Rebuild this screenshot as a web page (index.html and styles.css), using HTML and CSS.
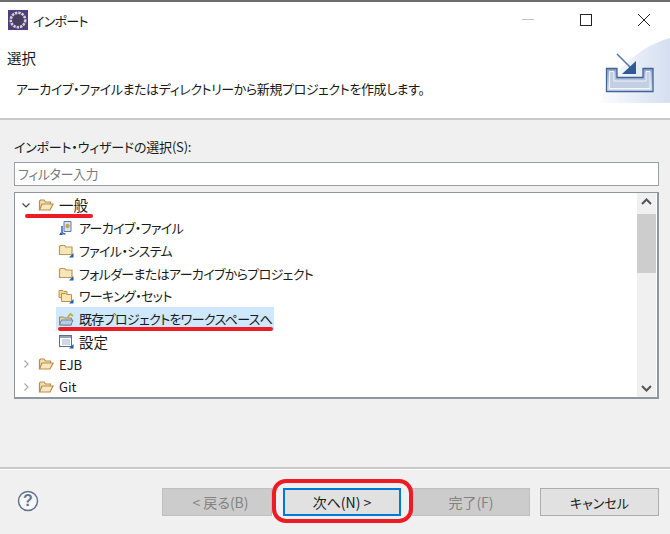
FILE: index.html
```html
<!DOCTYPE html>
<html lang="ja">
<head>
    <meta charset="UTF-8">
    <meta name="viewport" content="width=device-width, initial-scale=1.0">
    <title>インポート</title>
    <link rel="stylesheet" href="styles.css">
</head>
<body>
    <div class="dialog">
        <div class="titlebar">
            <svg class="app-icon" width="20" height="20" viewBox="0 0 20 20">
                <rect width="20" height="20" fill="#4f3f78"/>
                <circle cx="10" cy="10" r="7.2" fill="none" stroke="#d5d3d8" stroke-width="2.6" stroke-dasharray="2.4 1"/>
                <circle cx="10" cy="10" r="5.5" fill="#47415f"/>
            </svg>
            <span class="title-text">インポート</span>
            <div class="win-buttons">
                <svg width="14" height="14" viewBox="0 0 14 14"><path d="M1 6.5h12" stroke="#c4c4c4" fill="none"/></svg>
                <svg width="14" height="14" viewBox="0 0 14 14"><rect x="1.500" y="1.500" width="11" height="11" stroke="#222" fill="none"/></svg>
                <svg width="14" height="14" viewBox="0 0 14 14"><path d="M1 1l12 12M13 1L1 13" stroke="#222" fill="none"/></svg>
            </div>
        </div>

        <div class="banner">
            <div class="banner-text">
                <div class="banner-title">選択</div>
                <div class="banner-desc">アーカイブ・ファイルまたはディレクトリーから新規プロジェクトを作成します。</div>
            </div>
            <svg class="banner-art" width="70" height="66" viewBox="0 0 70 66">
                <defs>
                    <linearGradient id="wash" x1="0" y1="0" x2="1" y2="0">
                        <stop offset="0" stop-color="#fbfcfe"/>
                        <stop offset="1" stop-color="#d5dff0"/>
                    </linearGradient>
                    <linearGradient id="tray" x1="0" y1="0" x2="0" y2="1">
                        <stop offset="0" stop-color="#8fa6cc"/>
                        <stop offset="1" stop-color="#dbe3f0"/>
                    </linearGradient>
                </defs>
                <path d="M0 65C8 40 34 10 70 0V65Z" fill="url(#wash)"/>
                <path d="M6.500 30.500H17V39.500H43V30.500H53V53.500H6.500Z" fill="url(#tray)" stroke="#3f6396" stroke-width="1.300"/>
                <path d="M9.500 33.500H14V43H46V33.500H50V50.500H9.500Z" fill="#c3cfe3" stroke="#fff" stroke-width=".8"/>
                <path d="M17 16L34 33" stroke="#5578aa" stroke-width="1.600"/>
                <path d="M36 23V36H22Z" fill="#2f5a94"/>
            </svg>
        </div>

        <div class="content">
            <label class="field-label">インポート・ウィザードの選択(S):</label>
            <input class="filter" type="text" placeholder="フィルター入力">

            <div class="tree">
                <div class="tree-rows">
                    <div class="row kanji">
                        <svg class="twisty" width="10" height="10" viewBox="0 0 10 10"><path d="M1.500 3.500L5 7l3.500-3.500" stroke="#444" stroke-width="1.200" fill="none"/></svg>
                        <svg class="icon" width="16" height="16" viewBox="0 0 16 16"><use href="#open-folder"/></svg>
                        <span>一般</span>
                    </div>
                    <div class="row child">
                        <svg class="icon" width="16" height="16" viewBox="0 0 16 16">
                            <path d="M6 1.500h7v10H6z" fill="#d9e2ee" stroke="#5f7ea6"/>
                            <circle cx="9.500" cy="6" r="2.200" fill="#c9a25c"/>
                            <path d="M4 6v5c0 2 1.500 3 3.500 3" stroke="#3f6fb0" stroke-width="1.600" fill="none"/>
                            <path d="M1 15h4l-2-3z" fill="#1f5fa8"/>
                        </svg>
                        <span>アーカイブ・ファイル</span>
                    </div>
                    <div class="row child">
                        <svg class="icon" width="16" height="16" viewBox="0 0 16 16"><use href="#folder"/><path d="M15.500 11v4.500H11z" fill="#1f5fa8"/></svg>
                        <span>ファイル・システム</span>
                    </div>
                    <div class="row child">
                        <svg class="icon" width="16" height="16" viewBox="0 0 16 16"><use href="#folder"/><path d="M15.500 11v4.500H11z" fill="#1f5fa8"/></svg>
                        <span>フォルダーまたはアーカイブからプロジェクト</span>
                    </div>
                    <div class="row child">
                        <svg class="icon" width="16" height="16" viewBox="0 0 16 16">
                            <path d="M1 2.500h4l1 1h3v6H1z" fill="#f3d98f" stroke="#bb9150"/>
                            <path d="M3.500 5.500h4l1 1h5v7h-10z" fill="#f8e6b4" stroke="#bb9150"/>
                            <path d="M15.500 11v4.500H11z" fill="#1f5fa8"/>
                        </svg>
                        <span>ワーキング・セット</span>
                    </div>
                    <div class="row child">
                        <span class="selected">
                            <svg class="icon" width="16" height="16" viewBox="0 0 16 16">
                                <path d="M1.500 14V6h4l1 1h7v7z" fill="#e2d3a4" stroke="#8f8a78"/>
                                <path d="M1.500 14l2-5h11.500l-2 5z" fill="#b9cde6" stroke="#6d86a8"/>
                                <path d="M9.500 6.500L12.500 3l2.500 2" stroke="#d0a63e" stroke-width="1.700" fill="none"/>
                            </svg>
                            <span>既存プロジェクトをワークスペースへ</span>
                        </span>
                    </div>
                    <div class="row child kanji">
                        <svg class="icon" width="16" height="16" viewBox="0 0 16 16">
                            <rect x="1.500" y="2.500" width="12" height="11" fill="#fff" stroke="#5a6f90"/>
                            <path d="M2 3h11v2H2z" fill="#8fa3c0"/>
                            <path d="M4 7h8M4 9h8M4 11h8" stroke="#9fb0c8"/>
                            <path d="M15.500 11v4.500H11z" fill="#1f5fa8"/>
                        </svg>
                        <span>設定</span>
                    </div>
                    <div class="row latin">
                        <svg class="twisty" width="10" height="10" viewBox="0 0 10 10"><path d="M3.500 1.500L7 5 3.500 8.500" stroke="#aaa" stroke-width="1.200" fill="none"/></svg>
                        <svg class="icon" width="16" height="16" viewBox="0 0 16 16"><use href="#open-folder"/></svg>
                        <span>EJB</span>
                    </div>
                    <div class="row latin">
                        <svg class="twisty" width="10" height="10" viewBox="0 0 10 10"><path d="M3.500 1.500L7 5 3.500 8.500" stroke="#aaa" stroke-width="1.200" fill="none"/></svg>
                        <svg class="icon" width="16" height="16" viewBox="0 0 16 16"><use href="#open-folder"/></svg>
                        <span>Git</span>
                    </div>
                </div>
                <div class="scrollbar">
                    <svg width="19" height="17" viewBox="0 0 19 17"><path d="M5 11l4.500-4.500L14 11" stroke="#555" stroke-width="2" fill="none"/></svg>
                    <div class="scroll-track"><div class="scroll-thumb"></div></div>
                    <svg width="19" height="17" viewBox="0 0 19 17"><path d="M5 6l4.500 4.500L14 6" stroke="#555" stroke-width="2" fill="none"/></svg>
                </div>
            </div>
        </div>

        <div class="footer">
            <svg class="help" width="22" height="22" viewBox="0 0 22 22">
                <circle cx="11" cy="11" r="9.500" fill="#f6f7f9" stroke="#64748f" stroke-width="1.500"/>
                <text x="11" y="16" text-anchor="middle" class="help-mark">?</text>
            </svg>
            <div class="buttons">
                <button class="btn back" disabled>&lt; 戻る(B)</button>
                <button class="btn next">次へ(N) &gt;</button>
                <button class="btn finish" disabled>完了(F)</button>
                <button class="btn cancel">キャンセル</button>
            </div>
        </div>
    </div>

    <!-- red marker strokes drawn over the screenshot -->
    <div class="mark mark-general"></div>
    <div class="mark mark-existing"></div>
    <div class="mark-ring"></div>

    <svg class="defs" width="0" height="0">
        <defs>
            <g id="folder">
                <path d="M1.500 12.500V4.500l1-1h4l1.500 1.500h6v7.500z" fill="#f8e6bb" stroke="#c09755" stroke-width="1.200"/>
            </g>
            <g id="open-folder">
                <path d="M1.500 13V4l1-1h3.500l1.500 2h5V7" fill="#f3e0b0" stroke="#b98d4c" stroke-width="1.200"/>
                <path d="M1.500 13l2.500-6h11l-3 6z" fill="#f9e8bf" stroke="#b98d4c" stroke-width="1.200"/>
            </g>
        </defs>
    </svg>
</body>
</html>
```
FILE: styles.css
```css
* {
    box-sizing: border-box;
}
body {
    margin: 0;
    width: 670px;
    height: 534px;
    overflow: hidden;
    position: relative;
    background: #f0f0f0;
    color: #1a1a1a;
    font-family: "Noto Sans CJK JP", "Noto Sans", sans-serif;
    font-size: 14px;
    font-feature-settings: "palt";
}
.dialog {
    height: 534px;
    display: flex;
    flex-direction: column;
}
.titlebar {
    height: 38px;
    flex: none;
    display: flex;
    align-items: center;
    padding: 0 19px 0 8px;
    background: white;
    border-top: 2px solid #6d6d6d;
}
.app-icon {
    margin-right: 5px;
}
.title-text {
    font-size: 13px;
    letter-spacing: -0.7px;
}
.win-buttons {
    margin-left: auto;
    display: flex;
    gap: 44px;
}
.banner {
    height: 82px;
    flex: none;
    display: flex;
    justify-content: space-between;
    background: white;
    border-bottom: 2px solid #c8c8c8;
}
.banner-text {
    padding: 9px 0 0 7px;
}
.banner-title {
    font-size: 14.5px;
    line-height: 22px;
}
.banner-desc {
    font-size: 13px;
    letter-spacing: -0.4px;
    line-height: 20px;
    margin: 10px 0 0 9px;
}
.banner-art {
    align-self: flex-start;
    flex: none;
}
.content {
    flex: 1;
    padding: 17px 11px 0 14px;
}
.field-label {
    display: block;
    font-size: 13px;
    letter-spacing: -0.2px;
    line-height: 20px;
    margin-bottom: 5px;
}
.filter {
    display: block;
    width: 100%;
    height: 24px;
    padding: 0 3px 2px;
    border: 1px solid #9aa0a6;
    background: white;
    font: inherit;
    font-size: 13px;
    letter-spacing: -0.4px;
    font-feature-settings: "palt";
}
.filter::placeholder {
    color: #7a7a7a;
}
.tree {
    margin-top: 6px;
    height: 207px;
    display: flex;
    background: white;
    border: 1px solid #8f979e;
    border-right-width: 2px;
    border-bottom-width: 2px;
    padding: 0 1px;
}
.tree-rows {
    flex: 1;
    padding: 0.5px 0 0 5px;
    overflow: hidden;
}
.row {
    height: 22.75px;
    display: flex;
    align-items: center;
    font-size: 13px;
    letter-spacing: -0.65px;
    white-space: nowrap;
}
.row.kanji {
    font-size: 14.5px;
    letter-spacing: 0;
}
.row.latin {
    letter-spacing: 0;
}
.row.child {
    padding-left: 37px;
}
.twisty {
    margin-right: 7px;
    flex: none;
}
.icon {
    flex: none;
    margin-right: 5px;
}
.selected {
    display: flex;
    align-items: center;
    height: 23px;
    margin-left: -2px;
    padding: 0 2px;
    background: #cde8ff;
}
.scrollbar {
    width: 19px;
    flex: none;
    display: flex;
    flex-direction: column;
    background: #f0f0f0;
}
.scroll-track {
    flex: 1;
    padding-top: 4px;
}
.scroll-thumb {
    height: 59px;
    background: #cdcdcd;
}
.footer {
    height: 67px;
    flex: none;
    display: flex;
    align-items: flex-start;
    padding: 19px 11px 0 17px;
    border-top: 2px solid #c8c8c8;
    box-shadow: inset 0 1px 0 white;
}
.help {
    margin-top: 2px;
    flex: none;
}
.help-mark {
    font-family: "Liberation Sans", sans-serif;
    font-size: 16px;
    font-weight: bold;
    fill: #64748f;
}
.buttons {
    margin-left: auto;
    display: flex;
    gap: 10px;
}
.btn {
    width: 119px;
    height: 28px;
    padding: 0;
    border: 1px solid #adadad;
    background: #e1e1e1;
    color: #1a1a1a;
    font: inherit;
    font-size: 14px;
    font-feature-settings: "palt";
}
.btn[disabled] {
    background: #cccccc;
    border-color: #bfbfbf;
    color: #838383;
}
.back {
    width: 110px;
    margin-right: 1px;
    padding-left: 7px;
}
.next {
    width: 118px;
    margin-right: 1px;
    border: 2px solid #0078d7;
}
.finish {
    width: 118px;
}
.cancel {
    font-size: 13px;
}
.mark {
    position: absolute;
    height: 4px;
    background: #ec1c24;
    border-radius: 2px;
}
.mark-general {
    left: 25px;
    top: 214px;
    width: 68px;
}
.mark-existing {
    left: 58px;
    top: 327px;
    width: 215px;
}
.mark-ring {
    position: absolute;
    left: 272px;
    top: 479px;
    width: 141px;
    height: 44px;
    border: 4px solid #ec1c24;
    border-radius: 14px;
}
.defs {
    position: absolute;
}
```
